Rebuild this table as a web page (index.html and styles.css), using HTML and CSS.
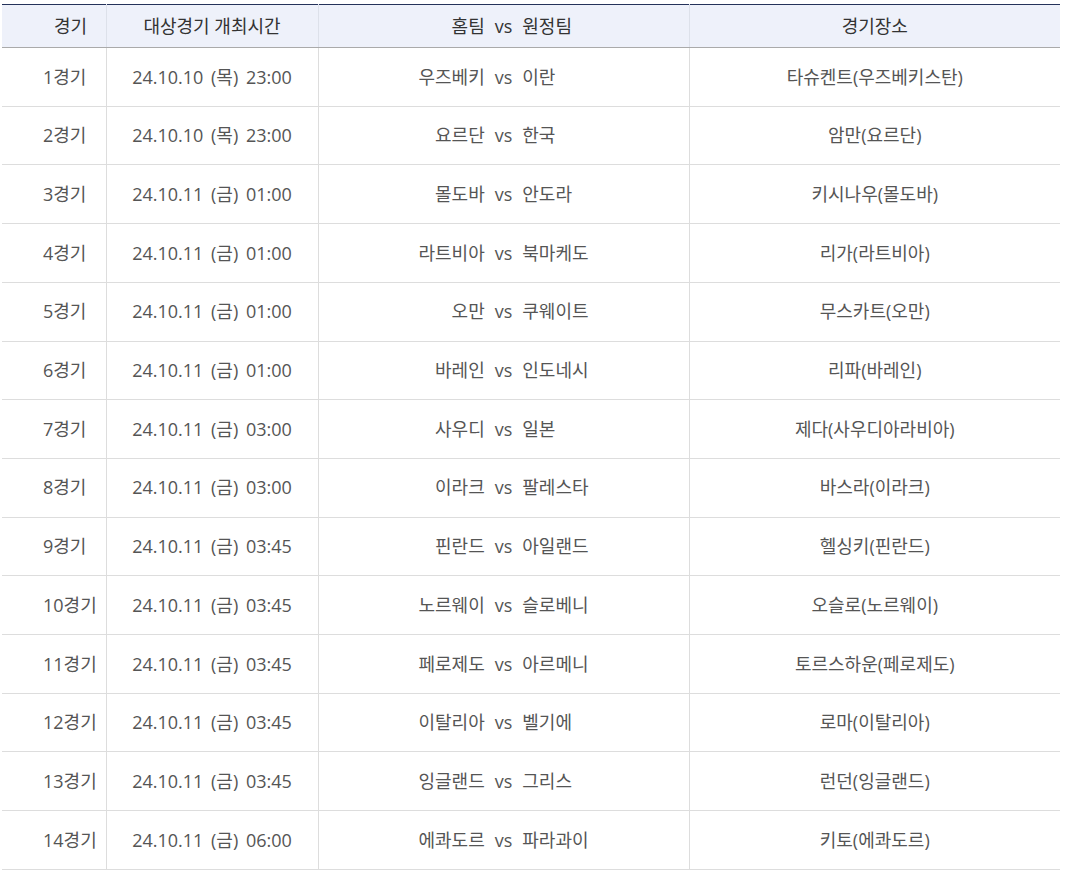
FILE: index.html
```html
<!DOCTYPE html>
<html lang="ko">
<head>
<meta charset="utf-8">
<title>경기 일정</title>
<link rel="stylesheet" href="styles.css">
</head>
<body>
<table class="schedule">
  <colgroup>
    <col class="c-no">
    <col class="c-time">
    <col class="c-match">
    <col class="c-place">
  </colgroup>
  <thead>
    <tr>
      <th class="no">경기</th>
      <th>대상경기 개최시간</th>
      <th><div class="match"><span class="home">홈팀</span><span class="vs">vs</span><span class="away">원정팀</span></div></th>
      <th>경기장소</th>
    </tr>
  </thead>
  <tbody>
    <tr><td class="no">1경기</td><td class="time">24.10.10 (목) 23:00</td><td><div class="match"><span class="home">우즈베키</span><span class="vs">vs</span><span class="away">이란</span></div></td><td>타슈켄트(우즈베키스탄)</td></tr>
    <tr><td class="no">2경기</td><td class="time">24.10.10 (목) 23:00</td><td><div class="match"><span class="home">요르단</span><span class="vs">vs</span><span class="away">한국</span></div></td><td>암만(요르단)</td></tr>
    <tr><td class="no">3경기</td><td class="time">24.10.11 (금) 01:00</td><td><div class="match"><span class="home">몰도바</span><span class="vs">vs</span><span class="away">안도라</span></div></td><td>키시나우(몰도바)</td></tr>
    <tr><td class="no">4경기</td><td class="time">24.10.11 (금) 01:00</td><td><div class="match"><span class="home">라트비아</span><span class="vs">vs</span><span class="away">북마케도</span></div></td><td>리가(라트비아)</td></tr>
    <tr><td class="no">5경기</td><td class="time">24.10.11 (금) 01:00</td><td><div class="match"><span class="home">오만</span><span class="vs">vs</span><span class="away">쿠웨이트</span></div></td><td>무스카트(오만)</td></tr>
    <tr><td class="no">6경기</td><td class="time">24.10.11 (금) 01:00</td><td><div class="match"><span class="home">바레인</span><span class="vs">vs</span><span class="away">인도네시</span></div></td><td>리파(바레인)</td></tr>
    <tr><td class="no">7경기</td><td class="time">24.10.11 (금) 03:00</td><td><div class="match"><span class="home">사우디</span><span class="vs">vs</span><span class="away">일본</span></div></td><td>제다(사우디아라비아)</td></tr>
    <tr><td class="no">8경기</td><td class="time">24.10.11 (금) 03:00</td><td><div class="match"><span class="home">이라크</span><span class="vs">vs</span><span class="away">팔레스타</span></div></td><td>바스라(이라크)</td></tr>
    <tr><td class="no">9경기</td><td class="time">24.10.11 (금) 03:45</td><td><div class="match"><span class="home">핀란드</span><span class="vs">vs</span><span class="away">아일랜드</span></div></td><td>헬싱키(핀란드)</td></tr>
    <tr><td class="no">10경기</td><td class="time">24.10.11 (금) 03:45</td><td><div class="match"><span class="home">노르웨이</span><span class="vs">vs</span><span class="away">슬로베니</span></div></td><td>오슬로(노르웨이)</td></tr>
    <tr><td class="no">11경기</td><td class="time">24.10.11 (금) 03:45</td><td><div class="match"><span class="home">페로제도</span><span class="vs">vs</span><span class="away">아르메니</span></div></td><td>토르스하운(페로제도)</td></tr>
    <tr><td class="no">12경기</td><td class="time">24.10.11 (금) 03:45</td><td><div class="match"><span class="home">이탈리아</span><span class="vs">vs</span><span class="away">벨기에</span></div></td><td>로마(이탈리아)</td></tr>
    <tr><td class="no">13경기</td><td class="time">24.10.11 (금) 03:45</td><td><div class="match"><span class="home">잉글랜드</span><span class="vs">vs</span><span class="away">그리스</span></div></td><td>런던(잉글랜드)</td></tr>
    <tr><td class="no">14경기</td><td class="time">24.10.11 (금) 06:00</td><td><div class="match"><span class="home">에콰도르</span><span class="vs">vs</span><span class="away">파라과이</span></div></td><td>키토(에콰도르)</td></tr>
  </tbody>
</table>
</body>
</html>
```

FILE: styles.css
```css
html, body {
  margin: 0;
  padding: 0;
  background: #ffffff;
}

body {
  font-family: "Open Sans", "Noto Sans CJK KR", sans-serif;
  font-size: 18px;
  color: #555555;
}

.schedule {
  margin: 4px 0 0 2px;
  width: 1058px;
  table-layout: fixed;
  border-collapse: collapse;
  border-top: 1px solid #24325a;
}

.c-no { width: 104px; }
.c-time { width: 212px; }
.c-match { width: 371px; }
.c-place { width: 371px; }

.schedule th {
  height: 42px;
  padding: 0;
  background: #eef1fa;
  color: #333333;
  font-weight: normal;
  text-align: center;
  line-height: 22px;
  border-left: 1px solid #dde1ea;
  border-bottom: 1px solid #aaaaaa;
}

.schedule td {
  padding: 17.5px 0;
  line-height: 22.71px;
  text-align: center;
  border-left: 1px solid #dddddd;
  border-bottom: 1px solid #dddddd;
  white-space: nowrap;
}

.schedule th:first-child,
.schedule td:first-child {
  border-left: none;
}

.schedule th.no {
  text-align: left;
  padding-left: 52px;
}

.schedule td.no {
  text-align: left;
  padding-left: 41px;
}

.schedule td.time {
  word-spacing: 3px;
}

.match {
  display: grid;
  grid-template-columns: 1fr auto 1fr;
  column-gap: 10px;
  align-items: center;
}

.match .home { text-align: right; }
.match .away { text-align: left; }
```
